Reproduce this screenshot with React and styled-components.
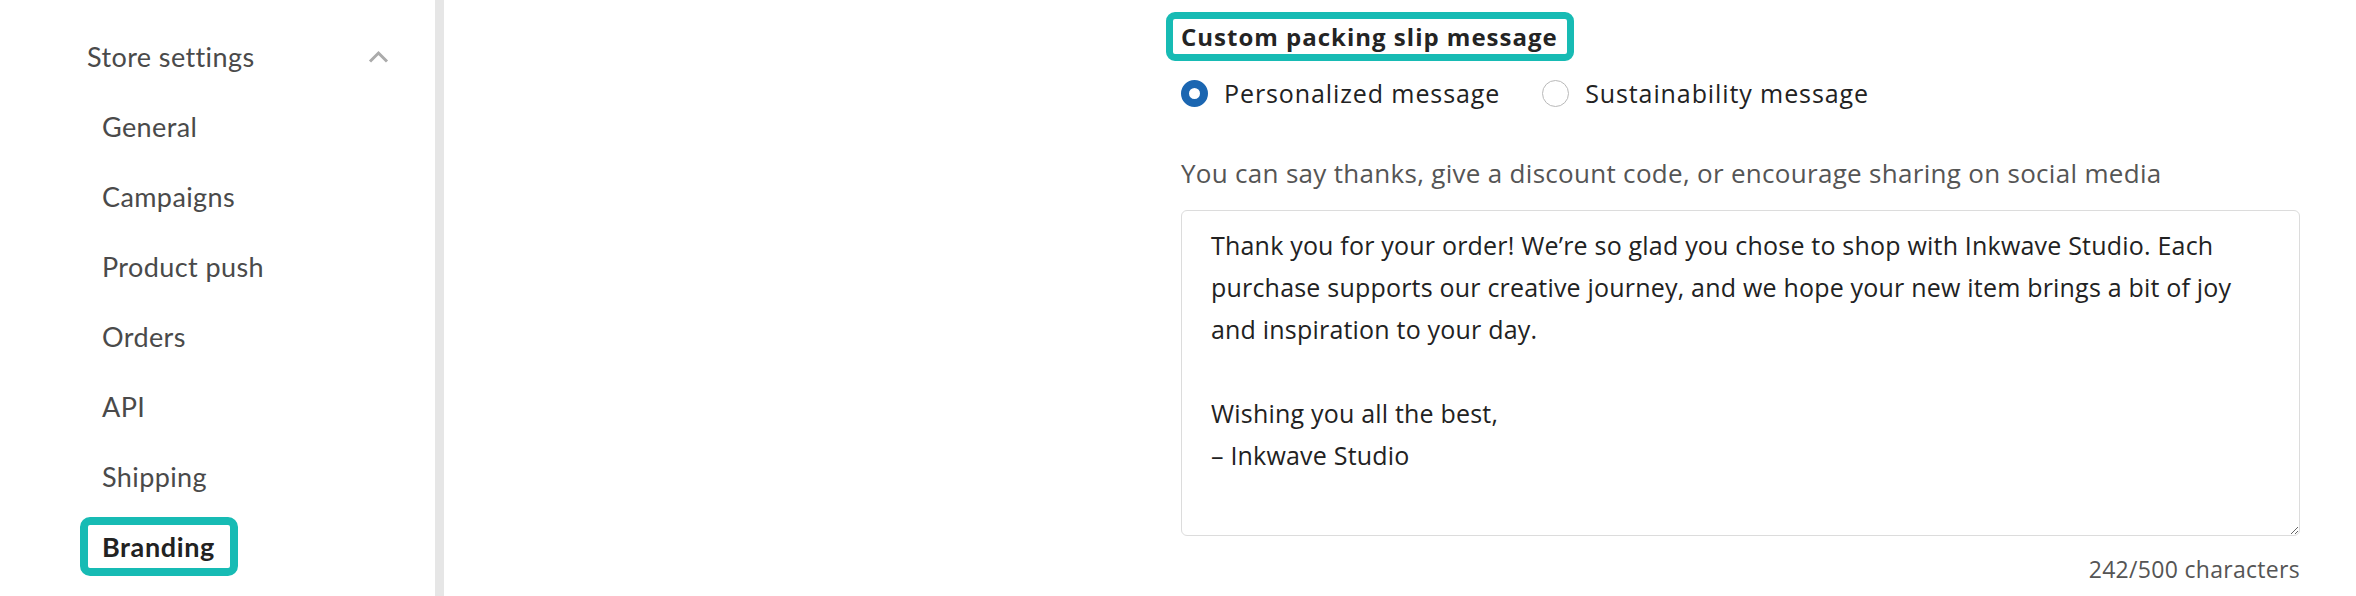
import { useState } from 'react';
import styled, { createGlobalStyle } from 'styled-components';

const GlobalStyle = createGlobalStyle`
    html, body {
        margin: 0;
        padding: 0;
        background: #fff;
    }
    body {
        font-family: Lato, "Open Sans", sans-serif;
        color: #222;
    }
`;

const highlight = '#17bbb4';
const formFont = '"Open Sans", Lato, sans-serif';

const Page = styled.div`
    display: flex;
    height: 596px;
    overflow: hidden;
`;

const Sidebar = styled.nav`
    width: 435px;
    flex-shrink: 0;
    padding-top: 21px;
    box-sizing: border-box;
`;

const GroupHeader = styled.div`
    display: flex;
    align-items: center;
    justify-content: space-between;
    height: 70px;
    padding: 0 46px 0 87px;
    font-size: 27px;
    letter-spacing: 0.4px;
    color: #4a4a4a;
`;

const NavList = styled.ul`
    list-style: none;
    margin: 0;
    padding: 0 0 0 88px;
`;

const NavRow = styled.li`
    height: 70px;
    display: flex;
    align-items: center;
`;

const NavLink = styled.span`
    display: inline-block;
    height: 43px;
    line-height: 43px;
    padding: 0 15px 0 14px;
    font-size: 27px;
    letter-spacing: ${(p) => (p.$active ? '0.6px' : '0.4px')};
    color: ${(p) => (p.$active ? '#222' : '#4a4a4a')};
    font-weight: ${(p) => (p.$active ? 700 : 400)};
    border-radius: 2px;
    outline: ${(p) => (p.$active ? `8px solid ${highlight}` : 'none')};
    cursor: pointer;
`;

const Divider = styled.div`
    width: 9px;
    flex-shrink: 0;
    background: #e6e6e6;
`;

const Main = styled.main`
    flex: 1;
    padding: 19px 0 0 737px;
    font-family: ${formFont};
`;

const Form = styled.section`
    width: 1119px;
    display: flex;
    flex-direction: column;
`;

const Heading = styled.h2`
    align-self: flex-start;
    margin: 0 0 0 -8px;
    padding: 0 9px 0 8px;
    height: 35px;
    line-height: 35px;
    font-size: 24px;
    font-weight: 700;
    letter-spacing: 1px;
    color: #242424;
    border-radius: 2px;
    outline: 7px solid ${highlight};
`;

const RadioRow = styled.div`
    display: flex;
    align-items: center;
    gap: 42px;
    margin-top: 26px;
`;

const RadioLabel = styled.label`
    display: flex;
    align-items: center;
    gap: 16px;
    font-size: 25px;
    line-height: 27px;
    letter-spacing: 0.9px;
    color: #222;
    cursor: pointer;
`;

const Radio = styled.input.attrs({ type: 'radio' })`
    appearance: none;
    flex-shrink: 0;
    margin: 0;
    width: 27px;
    height: 27px;
    border-radius: 50%;
    border: 1px solid #b9b9b9;
    box-sizing: border-box;
    background: #fff;

    &:checked {
        border: 8px solid #1b66b1;
    }
`;

const Hint = styled.p`
    margin: 51px 0 0;
    font-size: 26px;
    line-height: 30px;
    letter-spacing: 0.3px;
    color: #555;
`;

const MessageBox = styled.textarea`
    margin-top: 22px;
    height: 326px;
    box-sizing: border-box;
    padding: 13px 36px 13px 29px;
    border: 1px solid #dcdcdc;
    border-radius: 6px;
    font-family: ${formFont};
    font-size: 25px;
    line-height: 42px;
    letter-spacing: 0.2px;
    color: #222;
    resize: vertical;
    outline: none;
`;

const Counter = styled.div`
    margin-top: 19px;
    align-self: flex-end;
    font-size: 23px;
    line-height: 28px;
    letter-spacing: 0.3px;
    color: #555;
`;

const ChevronUp = () => (
    <svg width="21" height="13" viewBox="0 0 21 13" fill="none">
        <polyline points="2,11.5 10.5,3 19,11.5" stroke="#ababab" strokeWidth="3" />
    </svg>
);

const navItems = ['General', 'Campaigns', 'Product push', 'Orders', 'API', 'Shipping', 'Branding'];

const defaultMessage =
    'Thank you for your order! We\u2019re so glad you chose to shop with Inkwave Studio. Each purchase supports our creative journey, and we hope your new item brings a bit of joy and inspiration to your day.\n\nWishing you all the best,\n\u2013 Inkwave Studio';

const App = () => {
    const [messageType, setMessageType] = useState('personalized');
    const [message, setMessage] = useState(defaultMessage);

    return (
        <Page>
            <GlobalStyle />
            <Sidebar>
                <GroupHeader>
                    <span>Store settings</span>
                    <ChevronUp />
                </GroupHeader>
                <NavList>
                    {navItems.map((item) => (
                        <NavRow key={item}>
                            <NavLink $active={item === 'Branding'}>{item}</NavLink>
                        </NavRow>
                    ))}
                </NavList>
            </Sidebar>
            <Divider />
            <Main>
                <Form>
                    <Heading>Custom packing slip message</Heading>
                    <RadioRow>
                        <RadioLabel>
                            <Radio
                                name="slip-type"
                                checked={messageType === 'personalized'}
                                onChange={() => setMessageType('personalized')}
                            />
                            Personalized message
                        </RadioLabel>
                        <RadioLabel>
                            <Radio
                                name="slip-type"
                                checked={messageType === 'sustainability'}
                                onChange={() => setMessageType('sustainability')}
                            />
                            Sustainability message
                        </RadioLabel>
                    </RadioRow>
                    <Hint>You can say thanks, give a discount code, or encourage sharing on social media</Hint>
                    <MessageBox
                        value={message}
                        maxLength={500}
                        onChange={(e) => setMessage(e.target.value)}
                    />
                    <Counter>{message.length}/500 characters</Counter>
                </Form>
            </Main>
        </Page>
    );
};

export default App;
